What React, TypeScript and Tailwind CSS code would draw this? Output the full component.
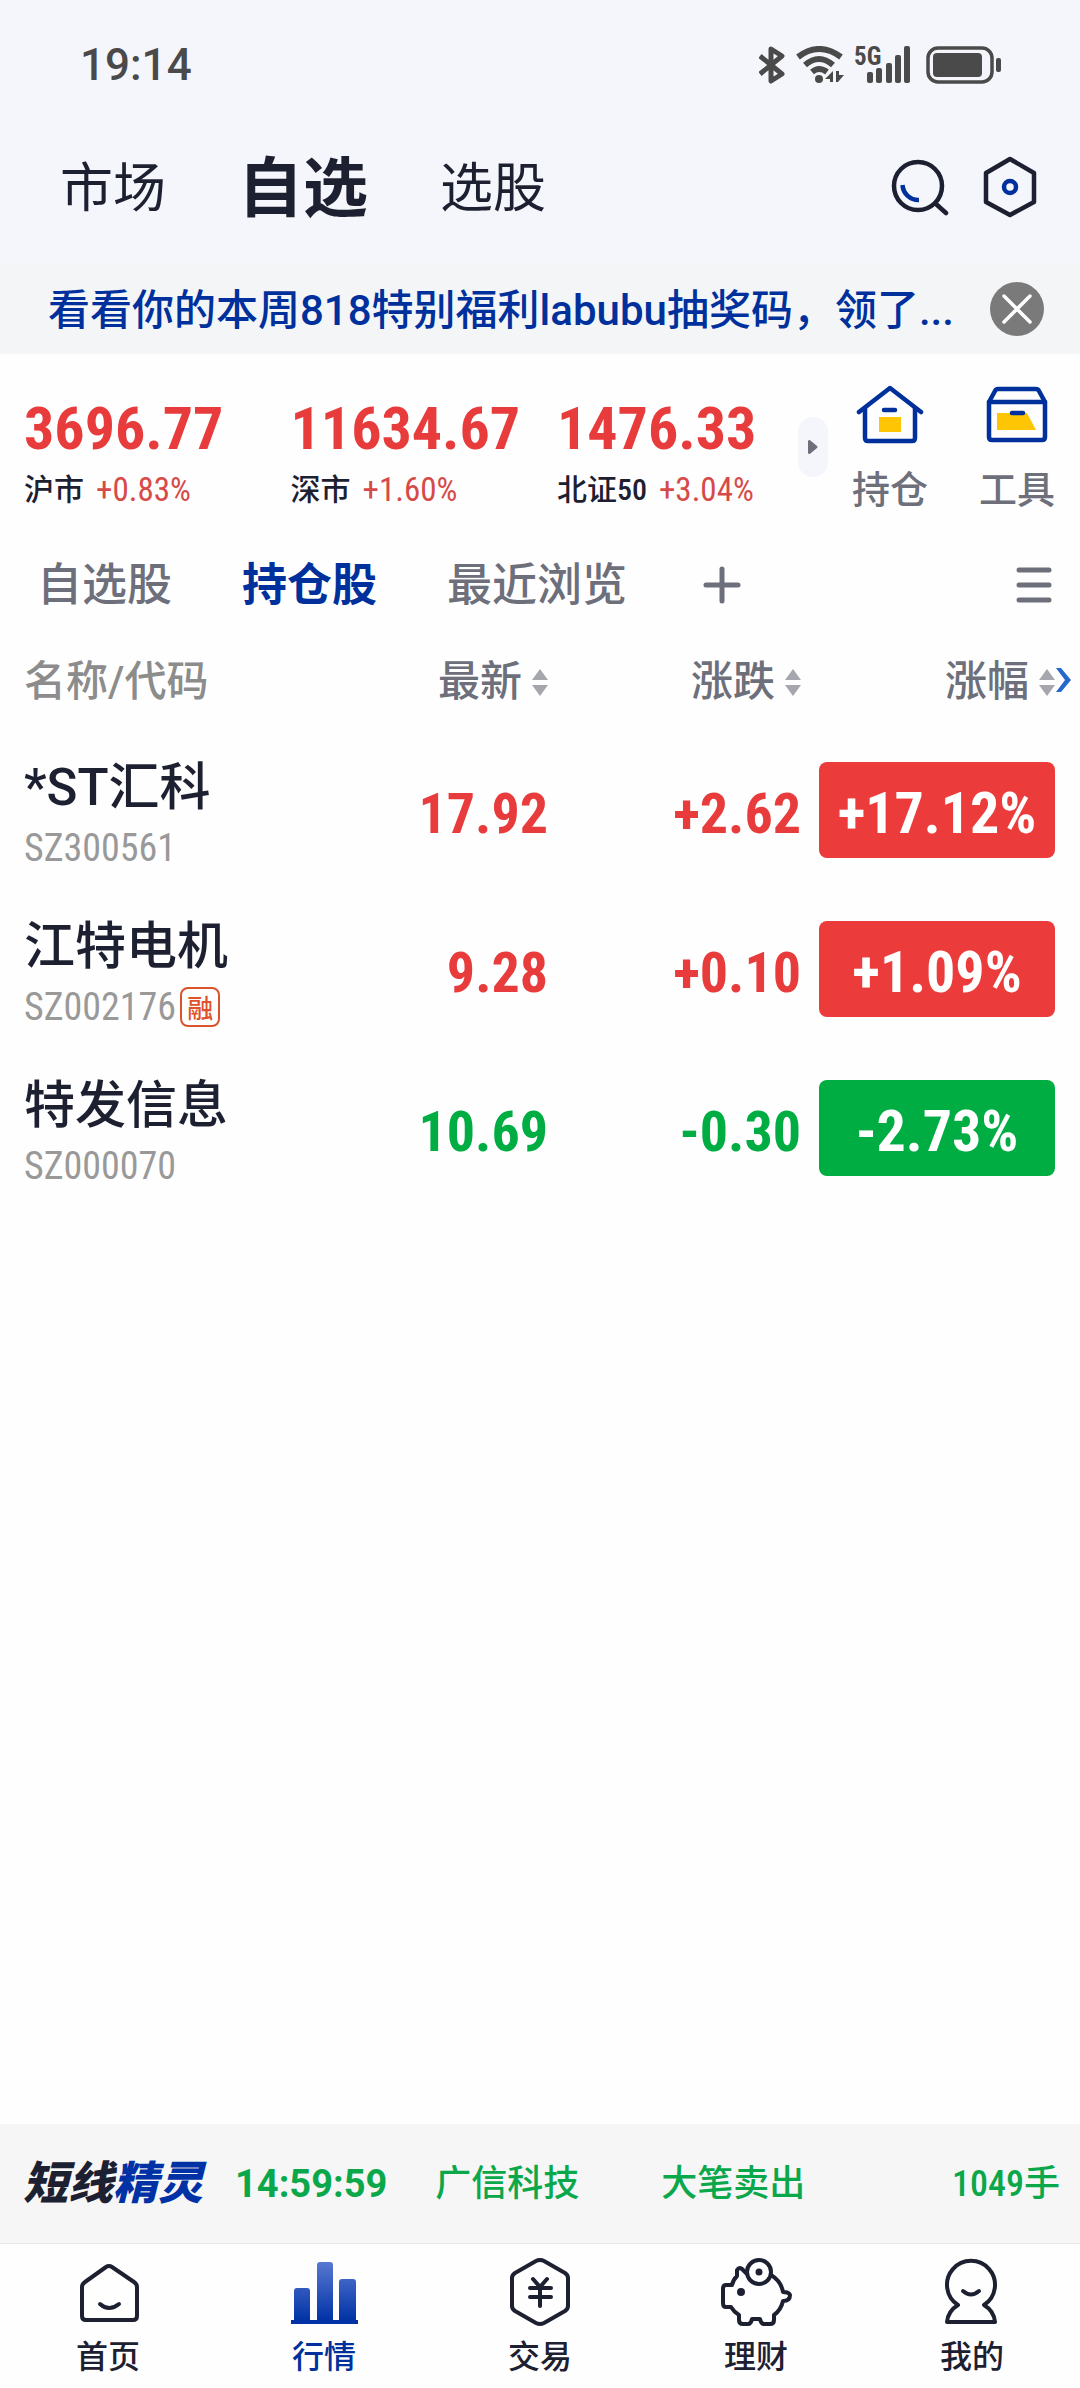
import React, { useState } from "react";

type Stock = {
  name: string;
  code: string;
  margin?: boolean;
  price: string;
  change: string;
  percent: string;
};

const indices = [
  { name: "沪市", value: "3696.77", percent: "+0.83%" },
  { name: "深市", value: "11634.67", percent: "+1.60%" },
  { name: "北证50", value: "1476.33", percent: "+3.04%" },
];

const stocks: Stock[] = [
  { name: "*ST汇科", code: "SZ300561", price: "17.92", change: "+2.62", percent: "+17.12%" },
  { name: "江特电机", code: "SZ002176", margin: true, price: "9.28", change: "+0.10", percent: "+1.09%" },
  { name: "特发信息", code: "SZ000070", price: "10.69", change: "-0.30", percent: "-2.73%" },
];

const listTabs = ["自选股", "持仓股", "最近浏览"];
const columns = ["最新", "涨跌", "涨幅"];

function StatusIcons() {
  return (
    <div className="flex items-center text-[#4a4a4a]">
      {/* bluetooth */}
      <svg width="26" height="38" viewBox="0 0 26 38" fill="none" stroke="currentColor" strokeWidth="5" strokeLinejoin="round">
        <path d="M1 10 L23 28 L12 35 V3 L23 10 L1 28" />
      </svg>
      {/* wifi */}
      <svg className="ml-[11px]" width="48" height="38" viewBox="0 0 48 38" fill="none" stroke="currentColor" strokeWidth="6">
        <path d="M2 11 Q23 -5 45 11" />
        <path d="M9 19 Q23 7 37 19" />
        <path d="M16 26 Q23 20 31 26" />
        <circle cx="23" cy="33" r="4" fill="currentColor" stroke="none" />
        <path d="M37 25 V36 H34 V33 H29 Z M40 25 H43 V29 H48 L42 36 H40 Z" fill="currentColor" stroke="none" />
      </svg>
      {/* signal */}
      <svg className="ml-[10px] overflow-visible" width="57" height="38" viewBox="0 0 57 38" fill="currentColor">
        <text x="0" y="19" className="font-['Roboto_Condensed',sans-serif] text-[25px] font-bold">5G</text>
        <rect x="13" y="26" width="6" height="11" rx="2" />
        <rect x="22" y="22" width="6" height="15" rx="2" />
        <rect x="32" y="17" width="6" height="20" rx="2" />
        <rect x="41" y="9" width="6" height="28" rx="2" />
        <rect x="50" y="0" width="6" height="37" rx="2" />
      </svg>
      {/* battery */}
      <svg className="ml-[15px]" width="76" height="38" viewBox="0 0 76 38" fill="currentColor">
        <rect x="2" y="2" width="64" height="34" rx="10" fill="none" stroke="currentColor" strokeWidth="3.5" />
        <rect x="7" y="7" width="49" height="24" rx="4" />
        <rect x="70" y="12" width="5" height="14" rx="2" />
      </svg>
    </div>
  );
}

function SortArrows() {
  return (
    <svg width="16" height="27" viewBox="0 0 16 27" fill="#a6a7ad">
      <path d="M8 0 L16 11 H0 Z M8 27 L0 16 H16 Z" />
    </svg>
  );
}

function HoldingIcon() {
  return (
    <svg width="68" height="60" viewBox="0 0 68 60" fill="none" stroke="#00309c" strokeWidth="4.5" strokeLinecap="round" strokeLinejoin="round">
      <path d="M3 28 L34 4 L65 28" />
      <path d="M9 24 V54 Q9 57 12 57 H56 Q59 57 59 54 V24" />
      <path d="M23 33 H45 V48 H23 Z" fill="#fdc504" stroke="none" />
      <path d="M28 26 H39" />
    </svg>
  );
}

function ToolIcon() {
  return (
    <svg width="64" height="60" viewBox="0 0 64 60" fill="none" stroke="#00309c" strokeWidth="4.5" strokeLinecap="round" strokeLinejoin="round">
      <path d="M4 18 L10 7 Q11 5 13 5 H51 Q53 5 54 7 L60 18 V53 Q60 56 57 56 H7 Q4 56 4 53 Z" />
      <path d="M4 18 H60" />
      <path d="M12 29 H42 L51 46 H12 Z" fill="#fdc504" stroke="none" />
      <path d="M27 29 H38" />
    </svg>
  );
}

const navStroke = { fill: "none", stroke: "currentColor", strokeWidth: 4, strokeLinecap: "round", strokeLinejoin: "round" } as const;

const navItems = [
  {
    label: "首页",
    icon: (
      <g {...navStroke}>
        <path d="M34 9 Q37 7 40 9 L62 24 Q65 26 65 29 V58 Q65 62 61 62 H14 Q10 62 10 58 V29 Q10 26 13 24 Z" />
        <path d="M28 46 Q37 54 47 46" />
      </g>
    ),
  },
  {
    label: "行情",
    icon: (
      <g fill="url(#bars)">
        <path d="M6 63 V33 Q6 30 9 30 H19 Q22 30 22 33 V63 Z M29 63 V7 Q29 4 32 4 H42 Q45 4 45 7 V63 Z M51 63 V24 Q51 21 54 21 H65 Q68 21 68 24 V63 Z" />
        <rect x="3" y="62" width="67" height="4" fill="#0032a5" />
      </g>
    ),
  },
  {
    label: "交易",
    icon: (
      <g {...navStroke}>
        <path d="M32 3 Q36 1 40 3 L61 15 Q64 17 64 20 V48 Q64 51 61 53 L40 65 Q36 67 32 65 L11 53 Q8 51 8 48 V20 Q8 17 11 15 Z" />
        <path d="M29 21 L36 29 L43 21 M36 29 V48 M26 30 H47 M26 39 H47" />
      </g>
    ),
  },
  {
    label: "理财",
    icon: (
      <g {...navStroke}>
        <circle cx="39" cy="14" r="12" />
        <circle cx="39" cy="14" r="2" fill="currentColor" strokeWidth="3" />
        <circle cx="21" cy="34" r="2" fill="currentColor" />
        <path d="M26 15 L22 11 Q19 9 17 12 V18 Q13 22 12 27 H6 Q3 27 3 31 V45 Q3 49 6 49 H11 Q14 54 19 57 V62 Q19 66 23 66 H28 Q31 66 32 61 H40 Q41 66 44 66 H50 Q54 66 54 62 V57 Q61 52 63 43 Q70 43 70 37 Q69 34 63 34 Q61 23 51 17" />
      </g>
    ),
  },
  {
    label: "我的",
    icon: (
      <g {...navStroke}>
        <path d="M22 47 A24 24 0 1 1 48 47 Q58 53 59 64 H11 Q12 53 22 47 Z" />
        <path d="M27 33 Q35 40 43 33" />
      </g>
    ),
  },
];

export default function App() {
  const [listTab, setListTab] = useState("持仓股");
  const [showNotice, setShowNotice] = useState(true);

  return (
    <div className="flex min-h-screen flex-col bg-[#fefefe] font-['Roboto','Noto_Sans_CJK_SC',sans-serif] font-medium text-[#1d2030]">
      <div className="bg-[#f5f6fb]">
        <div className="flex h-[130px] items-center justify-between pr-[78px] pl-20">
          <span className="text-[44px] leading-none text-[#4a4a4a]">19:14</span>
          <StatusIcons />
        </div>

        <header className="flex h-[134px] items-center pr-[43px] pb-[20px] pl-[60px]">
          <nav className="flex flex-1 items-center gap-[72px] pt-[4px] whitespace-nowrap">
            <button className="text-[53px] leading-[72px] font-normal">市场</button>
            <button className="text-[65px] leading-[72px] font-bold">自选</button>
            <button className="text-[53px] leading-[72px] font-normal">选股</button>
          </nav>
          <div className="flex items-center gap-[34px]">
            <button aria-label="搜索">
              <svg width="60" height="62" viewBox="0 0 60 62" fill="none" stroke="currentColor" strokeWidth="4.5" strokeLinecap="round">
                <circle cx="29" cy="30" r="24" />
                <path d="M47 48 L57 57" />
                <path d="M13.5 29 A16 16 0 0 0 30 44" stroke="#00309c" strokeLinecap="butt" />
              </svg>
            </button>
            <button aria-label="设置">
              <svg width="54" height="62" viewBox="0 0 54 62" fill="none" stroke="currentColor" strokeWidth="4.5">
                <path d="M27 3 L51 17 V46 L27 59 L3 46 V17 Z" strokeLinejoin="round" />
                <circle cx="27" cy="31" r="6" stroke="#00309c" />
              </svg>
            </button>
          </div>
        </header>
      </div>

      {showNotice && (
        <div className="flex h-[90px] items-center justify-between bg-[#f3f5f7] pr-9 pl-12">
          <a href="#notice" className="truncate pt-[4px] text-[42px] leading-[60px] text-[#00309c]">
            看看你的本周818特别福利labubu抽奖码，领了...
          </a>
          <button aria-label="关闭" onClick={() => setShowNotice(false)} className="flex size-[54px] flex-none items-center justify-center rounded-full bg-[#7a7a7a]">
            <svg width="30" height="30" viewBox="0 0 30 30" stroke="#fff" strokeWidth="3.5" strokeLinecap="round">
              <path d="M2 2 L28 28 M28 2 L2 28" />
            </svg>
          </button>
        </div>
      )}

      {/* indices */}
      <section className="flex pt-[28px] pr-[25px] pl-[24px]">
        {indices.map((item) => (
          <div key={item.name} className="flex-1 whitespace-nowrap nth-[3]:w-[241px] nth-[3]:flex-none">
            <div className="pt-[17px] font-['Roboto_Condensed',sans-serif] text-[60px] leading-[60px] font-bold text-[#e83c3c]">{item.value}</div>
            <div className="mt-[11px] flex items-center gap-[12px] leading-[40px]">
              <span className="font-['Roboto_Condensed','Noto_Sans_CJK_SC',sans-serif] text-[30px]">{item.name}</span>
              <span className="font-['Roboto_Condensed',sans-serif] text-[33px] font-normal text-[#d64a48]">{item.percent}</span>
            </div>
          </div>
        ))}
        <button aria-label="更多指数" className="mt-[35px] mr-[24px] flex h-[60px] w-[30px] flex-none items-center justify-center rounded-full bg-[#f5f6fb]">
          <svg width="10" height="14" viewBox="0 0 10 14" fill="#6d6f7b">
            <path d="M0 1 Q1 -1 3 1 L9 6 Q10 7 9 8 L3 13 Q1 15 0 13 Z" />
          </svg>
        </button>
        <div className="flex flex-none gap-[51px] pt-[2px] text-[38px] leading-[48px] text-[#6d6f7b]">
          <button className="flex flex-col items-center gap-[22px]">
            <HoldingIcon />
            持仓
          </button>
          <button className="flex flex-col items-center gap-[22px]">
            <ToolIcon />
            工具
          </button>
        </div>
      </section>

      {/* list tabs */}
      <div className="mt-[26px] flex h-[90px] items-center gap-[70px] pr-[26px] pl-[37px] text-[45px] leading-none whitespace-nowrap text-[#6d6f7b]">
        {listTabs.map((tab) => (
          <button
            key={tab}
            onClick={() => setListTab(tab)}
            className={tab === listTab ? "font-bold text-[#00309c]" : ""}
          >
            {tab}
          </button>
        ))}
        <button aria-label="添加分组">
          <svg width="50" height="50" viewBox="0 0 50 50" stroke="currentColor" strokeWidth="5" strokeLinecap="round">
            <path d="M25 9 V41 M9 25 H41" />
          </svg>
        </button>
        <button aria-label="管理" className="ml-auto">
          <svg width="40" height="40" viewBox="0 0 40 40" stroke="currentColor" strokeWidth="5" strokeLinecap="round">
            <path d="M5 5 H35 M5 20 H35 M5 35 H35" />
          </svg>
        </button>
      </div>

      <table className="w-full table-fixed border-collapse">
        <thead>
          <tr className="h-[100px] text-[42px] leading-none whitespace-nowrap text-[#6d6f7b]">
            <th className="pt-[4px] pl-[24px] text-left font-medium text-[#8c8c8c]">名称/代码</th>
            {columns.map((col) => (
              <th key={col} className="relative w-[253px] pt-[4px] font-medium last:w-[279px] last:pr-[25px]">
                <button className="ml-auto flex items-center gap-[10px]">
                  {col}
                  <SortArrows />
                </button>
                {col === "涨幅" && (
                  <svg className="absolute top-[38px] right-[9px]" width="16" height="24" viewBox="0 0 16 24" fill="#2468cc">
                    <path d="M1 0 H6 L16 12 L6 24 H1 L10 12 Z" />
                  </svg>
                )}
              </th>
            ))}
          </tr>
        </thead>
        <tbody>
          {stocks.map((s) => {
            const up = s.change.startsWith("+");
            return (
              <tr key={s.code} className={`h-[159px] text-right font-['Roboto_Condensed',sans-serif] text-[56px] leading-none font-bold ${up ? "text-[#e83c3c]" : "text-[#00ad43]"}`}>
                <td className="pt-[8px] pl-[24px] text-left font-medium whitespace-nowrap">
                  <div className="font-['Roboto','Noto_Sans_CJK_SC',sans-serif] text-[51px] leading-[56px] text-[#1d2030]">{s.name}</div>
                  <div className="mt-[12px] flex items-center gap-[4px] text-[38px] leading-[40px] font-normal text-[#999]">
                    {s.code}
                    {s.margin && (
                      <span className="flex size-[40px] items-center justify-center rounded-[8px] border-2 border-[#d9532c] font-['Noto_Sans_CJK_SC',sans-serif] text-[26px] leading-none font-medium text-[#e0532a]">融</span>
                    )}
                  </div>
                </td>
                <td className="pt-[8px]">{s.price}</td>
                <td className="pt-[8px]">{s.change}</td>
                <td className="pr-[25px] pl-[18px]">
                  <div className={`flex h-[96px] items-center justify-center rounded-[8px] pt-[6px] text-[58px] text-white ${up ? "bg-[#ec3b3b]" : "bg-[#00ad43]"}`}>{s.percent}</div>
                </td>
              </tr>
            );
          })}
        </tbody>
      </table>

      <div className="mt-auto flex h-[119px] items-center bg-[#f6f6f6] pr-[20px] pl-[23px] text-[36px] leading-none whitespace-nowrap text-[#0aa84a]">
        <span className="text-[45px] font-black text-[#1d2030] italic">
          短线<span className="text-[#0032a5]">精灵</span>
        </span>
        <span className="ml-[32px] text-[38px] font-bold">14:59:59</span>
        <span className="ml-[48px]">广信科技</span>
        <span className="ml-[82px]">大笔卖出</span>
        <span className="ml-auto font-['Roboto_Condensed','Noto_Sans_CJK_SC',sans-serif]">1049手</span>
      </div>

      <nav className="grid grid-cols-5 border-t border-[#e8e8e8] bg-[#fefefe] pt-[14px] pb-[11px]">
        {navItems.map((item) => (
          <a key={item.label} href="#nav" className={`flex flex-col items-center gap-[9px] text-[32px] leading-[40px] ${item.label === "行情" ? "text-[#00309c]" : "text-[#1d2030]"}`}>
            <svg width="72" height="70" viewBox="0 0 72 70">
              <defs>
                <linearGradient id="bars" x1="0" y1="0" x2="0" y2="1">
                  <stop offset="0" stopColor="#5878d2" />
                  <stop offset="1" stopColor="#0032a5" />
                </linearGradient>
              </defs>
              {item.icon}
            </svg>
            {item.label}
          </a>
        ))}
      </nav>
    </div>
  );
}
